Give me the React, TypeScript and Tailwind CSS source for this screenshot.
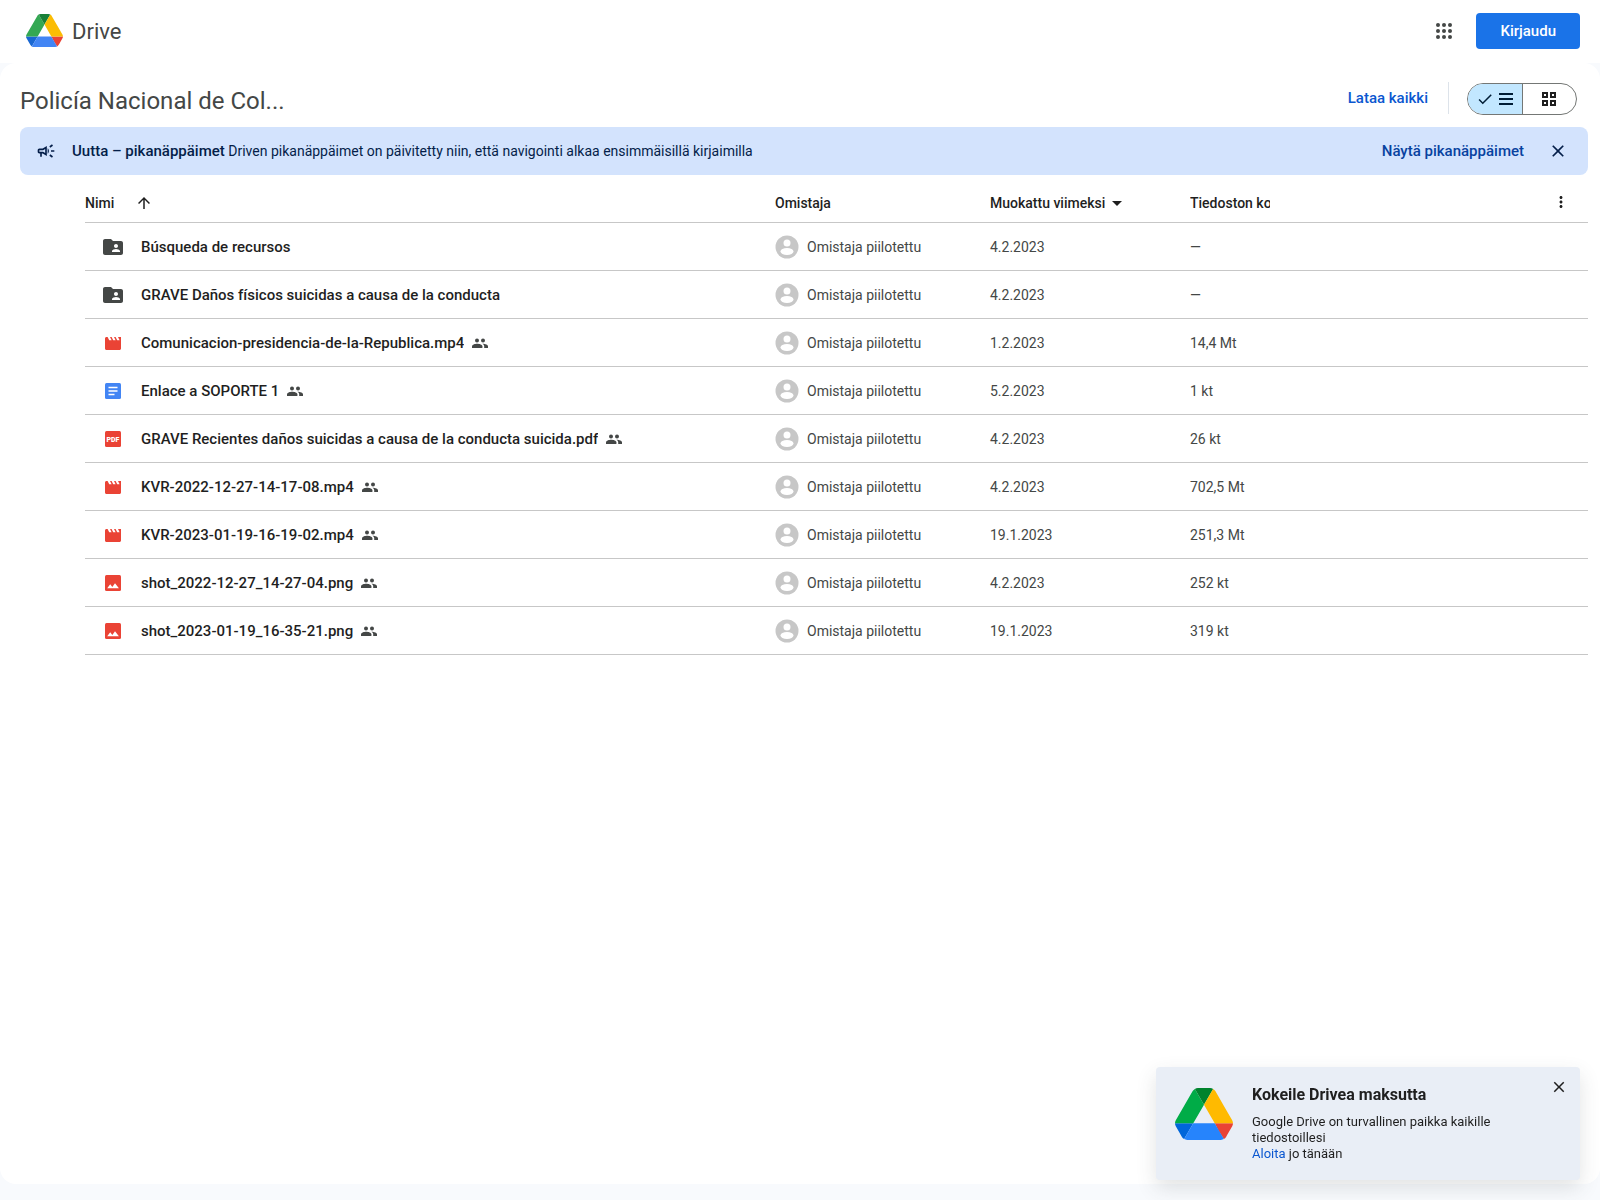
import { useState } from "react";
import {
  MdArrowDropDown,
  MdArrowUpward,
  MdCheck,
  MdClose,
  MdFolderShared,
  MdMoreVert,
  MdOutlineCampaign,
} from "react-icons/md";

type Kind = "folder" | "video" | "doc" | "pdf" | "image";

type Item = {
  name: string;
  kind: Kind;
  modified: string;
  size: string;
};

const items: Item[] = [
  { name: "Búsqueda de recursos", kind: "folder", modified: "4.2.2023", size: "—" },
  { name: "GRAVE Daños físicos suicidas a causa de la conducta", kind: "folder", modified: "4.2.2023", size: "—" },
  { name: "Comunicacion-presidencia-de-la-Republica.mp4", kind: "video", modified: "1.2.2023", size: "14,4 Mt" },
  { name: "Enlace a SOPORTE 1", kind: "doc", modified: "5.2.2023", size: "1 kt" },
  { name: "GRAVE Recientes daños suicidas a causa de la conducta suicida.pdf", kind: "pdf", modified: "4.2.2023", size: "26 kt" },
  { name: "KVR-2022-12-27-14-17-08.mp4", kind: "video", modified: "4.2.2023", size: "702,5 Mt" },
  { name: "KVR-2023-01-19-16-19-02.mp4", kind: "video", modified: "19.1.2023", size: "251,3 Mt" },
  { name: "shot_2022-12-27_14-27-04.png", kind: "image", modified: "4.2.2023", size: "252 kt" },
  { name: "shot_2023-01-19_16-35-21.png", kind: "image", modified: "19.1.2023", size: "319 kt" },
];

function DriveLogo({ className, bright = false }: { className: string; bright?: boolean }) {
  const c = bright
    ? { darkBlue: "#0066da", green: "#00ac47", red: "#ea4335", darkGreen: "#00832d", blue: "#2684fc", yellow: "#ffba00" }
    : { darkBlue: "#1967d2", green: "#34a853", red: "#ea4335", darkGreen: "#188038", blue: "#4285f4", yellow: "#fbbc04" };
  return (
    <svg viewBox="0 0 87.3 78" className={className} aria-hidden="true">
      <path fill={c.darkBlue} d="m6.6 66.85 3.85 6.65c.8 1.4 1.95 2.5 3.3 3.3l13.75-23.8h-27.5c0 1.55.4 3.1 1.2 4.5z" />
      <path fill={c.green} d="m43.65 25-13.75-23.8c-1.35.8-2.5 1.9-3.3 3.3l-25.4 44a9.06 9.06 0 0 0 -1.2 4.5h27.5z" />
      <path fill={c.red} d="m73.55 76.8c1.35-.8 2.5-1.9 3.3-3.3l1.6-2.75 7.65-13.25c.8-1.4 1.2-2.95 1.2-4.5h-27.502l5.852 11.5z" />
      <path fill={c.darkGreen} d="m43.65 25 13.75-23.8c-1.35-.8-2.9-1.2-4.5-1.2h-18.5c-1.6 0-3.15.45-4.5 1.2z" />
      <path fill={c.blue} d="m59.8 53h-32.3l-13.75 23.8c1.35.8 2.9 1.2 4.5 1.2h50.8c1.6 0 3.15-.45 4.5-1.2z" />
      <path fill={c.yellow} d="m73.4 26.5-12.7-22c-.8-1.4-1.95-2.5-3.3-3.3l-13.75 23.8 16.15 28h27.45c0-1.55-.4-3.1-1.2-4.5z" />
    </svg>
  );
}

function AppsIcon() {
  return (
    <svg viewBox="0 0 24 24" className="size-6" fill="currentColor" aria-hidden="true">
      {[6, 12, 18].map((y) => [6, 12, 18].map((x) => <circle key={`${x}-${y}`} cx={x} cy={y} r="2" />))}
    </svg>
  );
}

function FileIcon({ kind }: { kind: Kind }) {
  if (kind === "folder") return <MdFolderShared className="size-6 text-[#444746]" />;
  return (
    <svg viewBox="0 0 16 16" className="size-4" aria-hidden="true">
      {kind === "video" && (
        <path
          fill="#ea4335"
          d="M13 2l1.600 3.200h-2.400L10.600 2H9l1.600 3.200H8.200L6.600 2H5l1.600 3.200H4.200L2.600 2H1.500C.7 2 0 2.700 0 3.500v10c0 .8.700 1.500 1.500 1.500h13c.8 0 1.500-.7 1.500-1.500V2z"
        />
      )}
      {kind === "doc" && (
        <>
          <rect width="16" height="16" rx="1.500" fill="#4285f4" />
          <path fill="#fff" d="M3.500 3.700h9v1.600h-9zM3.500 7.200h9v1.600h-9zM3.500 10.700h6v1.600h-6z" />
        </>
      )}
      {kind === "pdf" && (
        <>
          <rect width="16" height="16" rx="1.500" fill="#ea4335" />
          <text x="8" y="10.500" textAnchor="middle" fill="#fff" fontSize="7" fontWeight="900" fontFamily="Roboto, sans-serif">
            PDF
          </text>
        </>
      )}
      {kind === "image" && (
        <>
          <rect width="16" height="16" rx="1.500" fill="#ea4335" />
          <path fill="#fff" d="M2.200 13.300l3-4 2.100 2.600 2.700-3.700 3.900 5.100z" />
        </>
      )}
    </svg>
  );
}

function SharedIcon() {
  return (
    <svg viewBox="0 0 16 16" className="ml-2 size-4 shrink-0" fill="currentColor" aria-hidden="true">
      <circle cx="5" cy="5.500" r="2" />
      <circle cx="11" cy="5.500" r="2" />
      <path d="M0 13v-1.700C0 9.600 3 8.700 5.200 8.700s5.200.9 5.200 2.600V13z" />
      <path d="M10.400 8.800c2.600-.1 5.600.9 5.600 2.500V13h-3.800v-1.700c0-1.100-.7-1.900-1.800-2.500z" />
    </svg>
  );
}

function OwnerAvatar() {
  return (
    <svg viewBox="0 0 24 24" className="size-6 shrink-0" aria-hidden="true">
      <circle cx="12" cy="12" r="11.500" fill="#c7c7c7" />
      <circle cx="12" cy="8" r="3.500" fill="#fff" />
      <ellipse cx="12" cy="16.500" rx="6.500" ry="3.400" fill="#fff" />
    </svg>
  );
}

export default function App() {
  const [banner, setBanner] = useState(true);
  const [promo, setPromo] = useState(true);

  return (
    <div className="flex min-h-screen flex-col bg-[#f8fafd] pb-4 font-[Roboto,sans-serif] text-sm text-[#1f1f1f]">
      <header className="flex h-[63px] items-center bg-white pr-5 pb-0.5 pl-[26px]">
        <a href="#" className="flex items-center gap-[9px] text-[22px] text-[#444746]">
          <DriveLogo className="h-[33px] w-[37px]" />
          <span className="pt-0.5">Drive</span>
        </a>
        <button type="button" aria-label="Google-sovellukset" className="ml-auto text-[#444746]">
          <AppsIcon />
        </button>
        <button type="button" className="ml-5 h-9 rounded bg-[#1a73e8] px-6 pt-0.5 text-[15px] font-medium text-white">
          Kirjaudu
        </button>
      </header>

      <main className="flex-1 rounded-2xl bg-white">
        <div className="flex h-16 items-center pt-1 pr-[23px] pl-5">
          <h1 className="pt-2 text-2xl text-[#444746]">Policía Nacional de Col...</h1>
          <button type="button" className="ml-auto pt-1 text-[15px] font-medium text-[#0b57d0]">
            Lataa kaikki
          </button>
          <div className="mt-0.5 ml-5 h-8 w-px bg-[#dde3ea]" />
          <div className="mt-1 ml-[18px] flex h-8 w-[110px] overflow-hidden rounded-full border border-[#747775]">
            <button
              type="button"
              aria-label="Luettelonäkymä"
              aria-pressed="true"
              className="flex flex-1 items-center justify-center gap-1 border-r border-[#747775] bg-[#c2e7ff] text-[#001d35]"
            >
              <MdCheck className="size-[18px]" />
              <svg viewBox="0 0 16 16" className="size-4" aria-hidden="true">
                <path fill="currentColor" d="M1 2h14v2H1zM1 7h14v2H1zM1 12h14v2H1z" />
              </svg>
            </button>
            <button type="button" aria-label="Ruudukkonäkymä" aria-pressed="false" className="flex flex-1 items-center justify-center">
              <svg viewBox="0 0 14 14" className="size-3.5" fill="none" stroke="currentColor" strokeWidth="2" aria-hidden="true">
                <path d="M1 1h4v4H1zM9 1h4v4H9zM1 9h4v4H1zM9 9h4v4H9z" />
              </svg>
            </button>
          </div>
        </div>

        {banner && (
          <div className="mr-3 ml-5 flex h-12 items-center rounded-lg bg-[#d3e3fd] pr-5 pl-4 text-[#041e49]">
            <MdOutlineCampaign className="size-5" />
            <p className="ml-4 pt-0.5">
              <strong className="text-[15px] font-medium">Uutta – pikanäppäimet</strong>{" "}
              Driven pikanäppäimet on päivitetty niin, että navigointi alkaa ensimmäisillä kirjaimilla
            </p>
            <button type="button" className="ml-auto pt-0.5 text-[15px] font-medium text-[#0842a0]">
              Näytä pikanäppäimet
            </button>
            <button type="button" aria-label="Sulje" className="ml-6" onClick={() => setBanner(false)}>
              <MdClose className="size-5" />
            </button>
          </div>
        )}

        <div className="mr-3 ml-[85px]">
          <table className="w-full table-fixed text-left">
            <thead>
              <tr className="h-[47px] border-b border-[#c7c7c7]">
                <th className="p-0 pt-2.5 font-medium">
                  <div className="flex items-center gap-[21px]">
                    <span>Nimi</span>
                    <button type="button" aria-label="Käännä lajittelusuunta">
                      <MdArrowUpward className="size-[18px]" />
                    </button>
                  </div>
                </th>
                <th className="w-[215px] p-0 pt-2.5 font-medium">Omistaja</th>
                <th className="w-[200px] p-0 pt-2.5 font-medium">
                  <button type="button" className="flex h-5 items-center">
                    Muokattu viimeksi
                    <MdArrowDropDown className="size-6" />
                  </button>
                </th>
                <th className="w-[80px] p-0 pt-2.5 font-medium">
                  <div className="overflow-hidden whitespace-nowrap">Tiedoston koko</div>
                </th>
                <th className="w-[318px] p-0 pt-2">
                  <button type="button" aria-label="Lisää" className="mr-[18px] ml-auto block">
                    <MdMoreVert className="size-[18px]" />
                  </button>
                </th>
              </tr>
            </thead>
            <tbody>
              {items.map((item) => (
                <tr key={item.name} className="h-12 border-b border-[#c7c7c7] text-[#444746]">
                  <td className="p-0 pt-0.5">
                    <div className="flex h-6 items-center pl-4">
                      <span className="flex w-6 shrink-0 justify-center">
                        <FileIcon kind={item.kind} />
                      </span>
                      <span className="ml-4 truncate text-[15px] leading-6 font-medium text-[#1f1f1f]">{item.name}</span>
                      {item.kind !== "folder" && <SharedIcon />}
                    </div>
                  </td>
                  <td className="p-0 pt-px">
                    <div className="flex items-center gap-2">
                      <OwnerAvatar />
                      <span>Omistaja piilotettu</span>
                    </div>
                  </td>
                  <td className="p-0 pt-px">{item.modified}</td>
                  <td className="p-0 pt-px whitespace-nowrap">{item.size}</td>
                  <td className="p-0" />
                </tr>
              ))}
            </tbody>
          </table>
        </div>
      </main>

      {promo && (
        <aside className="fixed right-5 bottom-5 flex w-[424px] rounded-sm bg-[#e9eef6] px-[19px] pt-[17px] pb-[18px] shadow-[0_8px_20px_rgba(60,64,67,0.15)]">
          <DriveLogo bright className="mt-1 h-[52px] w-[58px] shrink-0" />
          <div className="ml-[19px] flex-1">
            <h2 className="pt-px text-base leading-5 font-bold">Kokeile Drivea maksutta</h2>
            <p className="mt-[9px] w-[260px] text-[13px] leading-4">
              Google Drive on turvallinen paikka kaikille tiedostoillesi
              <br />
              <a href="#" className="text-[#0b57d0]">
                Aloita
              </a>{" "}
              jo tänään
            </p>
          </div>
          <button type="button" aria-label="Sulje" className="-mt-1.5 -mr-[7px] self-start" onClick={() => setPromo(false)}>
            <MdClose className="size-[18px]" />
          </button>
        </aside>
      )}
    </div>
  );
}
